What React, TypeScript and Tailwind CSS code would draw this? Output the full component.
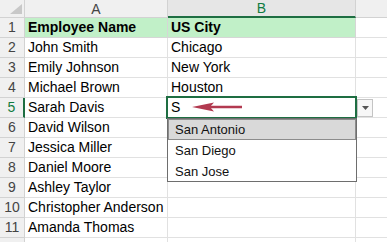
import React from 'react';

const names = [
  'Employee Name',
  'John Smith',
  'Emily Johnson',
  'Michael Brown',
  'Sarah Davis',
  'David Wilson',
  'Jessica Miller',
  'Daniel Moore',
  'Ashley Taylor',
  'Christopher Anderson',
  'Amanda Thomas',
  '',
];

const cities = ['US City', 'Chicago', 'New York', 'Houston', 'S', '', '', '', '', '', '', ''];

const options = ['San Antonio', 'San Diego', 'San Jose'];

export default function App() {
  return (
    <div className="relative w-[387px] h-[242px] overflow-hidden bg-white font-['Liberation_Sans',sans-serif] text-[14px] text-black">
      {/* column headers */}
      <div className="flex h-[18px]">
        <div className="relative w-[25px] shrink-0 bg-[#f0f0f0] border-r border-b border-[#d2d2d2]">
          <svg className="absolute left-[10px] top-[4px]" width="12" height="10" viewBox="0 0 12 10">
            <polygon points="0,10 12,10 12,0" fill="#c8c8c8" />
          </svg>
        </div>
        <div className="w-[143px] shrink-0 flex items-center justify-center bg-[#f0f0f0] border-r border-b border-[#d2d2d2] text-[#444] leading-none">
          A
        </div>
        <div className="w-[188px] shrink-0 flex items-center justify-center bg-[#e6e6e6] border-r border-[#d2d2d2] border-b-2 border-b-[#1e6e42] text-[#107c41] leading-none">
          B
        </div>
        <div className="flex-1 bg-[#f0f0f0] border-b border-[#d2d2d2]" />
      </div>

      {/* rows */}
      {names.map((name, i) => {
        const row = i + 1;
        const sel = row === 5;
        const hdr = i === 0;
        return (
          <div key={i} className="flex h-[20px]">
            <div
              className={
                sel
                  ? 'w-[25px] shrink-0 flex items-center justify-center bg-[#f0f0f0] border-b border-[#d2d2d2] border-r-2 border-r-[#1e6e42] text-[#107c41]'
                  : 'w-[25px] shrink-0 flex items-center justify-center bg-[#f0f0f0] border-b border-r border-[#d2d2d2] text-[#444]'
              }
            >
              {row <= 11 ? row : ''}
            </div>
            <div
              className={
                hdr
                  ? 'w-[143px] shrink-0 flex items-center pl-[3px] border-r border-b border-[#d6d6d6] bg-[#c1f0c8] font-bold whitespace-nowrap'
                  : 'w-[143px] shrink-0 flex items-center pl-[3px] border-r border-b border-[#e1e1e1] whitespace-nowrap'
              }
            >
              {name}
            </div>
            <div
              className={
                hdr
                  ? 'w-[188px] shrink-0 flex items-center pl-[3px] border-r border-b border-[#d6d6d6] bg-[#c1f0c8] font-bold whitespace-nowrap'
                  : 'w-[188px] shrink-0 flex items-center pl-[3px] border-r border-b border-[#e1e1e1] whitespace-nowrap'
              }
            >
              {cities[i]}
            </div>
            <div className="flex-1 border-b border-[#e1e1e1]" />
          </div>
        );
      })}

      {/* selected cell B5 */}
      <div className="absolute left-[166px] top-[96px] w-[191px] h-[23px] border-2 border-[#1e6e42]" />

      {/* arrow */}
      <svg className="absolute left-[190px] top-[100px]" width="54" height="14" viewBox="0 0 54 14">
        <line x1="16" y1="7" x2="52" y2="7" stroke="#b23a50" strokeWidth="2.4" />
        <polygon points="2,7 24,2.5 20,7 24,11.5" fill="#b23a50" />
      </svg>

      {/* dropdown button */}
      <div className="absolute left-[357px] top-[99px] w-[16px] h-[18px] flex items-center justify-center bg-[#f7f7f7] border border-[#c4c4c4]">
        <svg width="7" height="4" viewBox="0 0 7 4">
          <polygon points="0,0 7,0 3.5,4" fill="#555" />
        </svg>
      </div>

      {/* validation list */}
      <div className="absolute left-[167px] top-[118px] w-[190px] h-[64px] bg-white border border-[#6e6e6e] font-['Liberation_Sans',sans-serif] text-[13px] text-[#111]">
        {options.map((o, i) => (
          <div
            key={o}
            className={
              i === 0
                ? 'h-[21px] flex items-center pl-[6px] bg-[#d9d9d9] border border-[#8c8c8c]'
                : 'h-[21px] flex items-center pl-[7px]'
            }
          >
            {o}
          </div>
        ))}
      </div>
    </div>
  );
}
